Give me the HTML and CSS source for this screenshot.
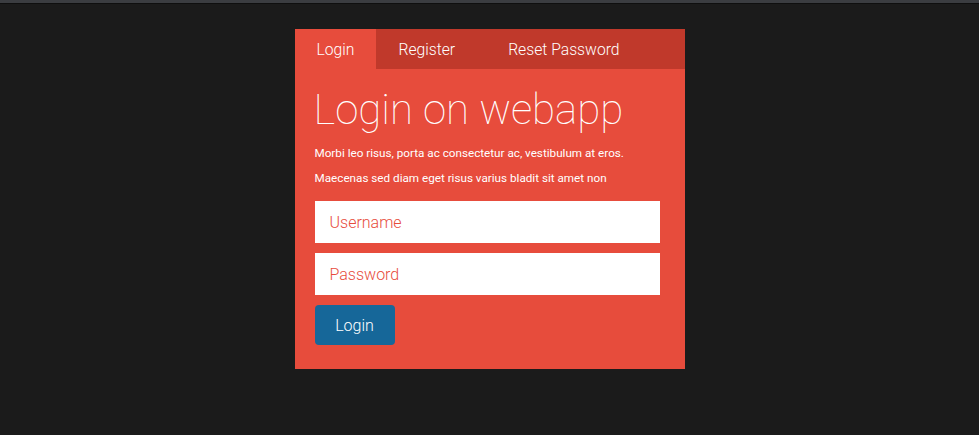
FILE: index.html
```html
<!DOCTYPE html>
<html>
<head>
<meta charset="utf-8">
<link rel="stylesheet" href="styles.css">
</head>
<body>
<div class="topbar"></div>
<div class="card">
  <nav class="tabs">
    <a class="tab active">Login</a>
    <a class="tab">Register</a>
    <a class="tab tab-reset">Reset Password</a>
  </nav>
  <div class="body">
    <h1 class="title">Login on webapp</h1>
    <p class="text">Morbi leo risus, porta ac consectetur ac, vestibulum at eros.</p>
    <p class="text">Maecenas sed diam eget risus varius bladit sit amet non</p>
    <form class="form">
      <input class="field" type="text" placeholder="Username">
      <input class="field" type="password" placeholder="Password">
      <button class="btn" type="button">Login</button>
    </form>
  </div>
</div>
</body>
</html>
```
FILE: styles.css
```css
html, body {
  margin: 0;
  padding: 0;
  background: #1b1b1b;
  font-family: Roboto, "Liberation Sans", sans-serif;
}
.topbar {
  height: 3px;
  background: #3b3d41;
  border-bottom: 1px solid #0f0f0f;
}
.card {
  width: 390px;
  margin: 25px auto 0;
  background: #e74c3c;
  color: #fff;
}
.tabs {
  display: flex;
  height: 40px;
  background: #c0392b;
}
.tab {
  display: flex;
  align-items: center;
  padding: 0 22px;
  font-size: 15.7px;
  font-weight: 300;
  color: #fff;
}
.tab.active {
  background: #e74c3c;
}
.tab-reset {
  margin-left: 9px;
}
.body {
  padding: 16px 25px 24px 20px;
}
.title {
  margin: 0 0 0 -1px;
  font-size: 42px;
  line-height: 50px;
  font-weight: 100;
}
.text {
  margin: 10px 0 0;
  font-size: 11.7px;
  line-height: 17px;
}
.text + .text {
  margin-top: 8px;
}
.form {
  display: flex;
  flex-direction: column;
  gap: 10px;
  margin-top: 14px;
}
.field {
  box-sizing: border-box;
  height: 42px;
  width: 100%;
  border: none;
  outline: none;
  padding: 0 15px;
  font-family: Roboto, "Liberation Sans", sans-serif;
  font-size: 16px;
  font-weight: 300;
  color: #e74c3c;
  background: #fff;
}
.field::placeholder {
  color: #e74c3c;
  opacity: 1;
}
.btn {
  width: 80px;
  height: 40px;
  border: none;
  border-radius: 4px;
  background: #166799;
  color: #fff;
  font-family: Roboto, "Liberation Sans", sans-serif;
  font-size: 16px;
  font-weight: 300;
  padding: 0;
}
```
